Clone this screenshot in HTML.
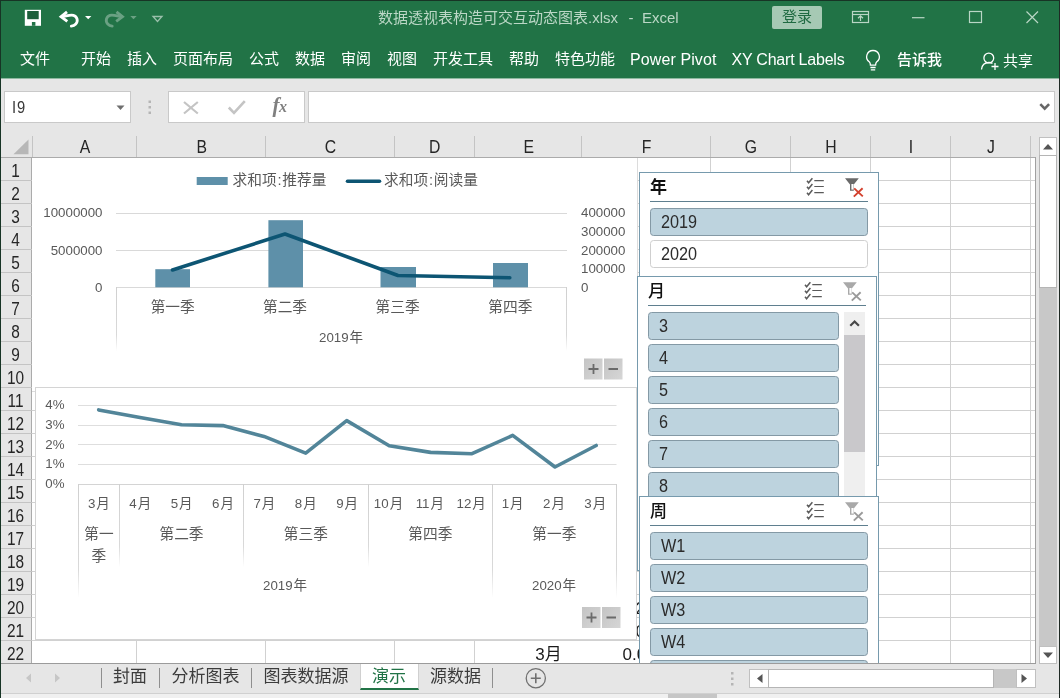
<!DOCTYPE html>
<html lang="zh-CN">
<head>
<meta charset="utf-8">
<title>Excel</title>
<style>
*{box-sizing:border-box;margin:0;padding:0}
html,body{width:1060px;height:698px;overflow:hidden;background:#e6e6e6}
body{will-change:transform;position:relative;font-family:"Liberation Sans","Noto Sans CJK SC",sans-serif;color:#222;font-size:14px}
.a{position:absolute}
.t{position:absolute;white-space:nowrap;line-height:1}
/* title + ribbon */
#green{left:0;top:0;width:1060px;height:79px;background:#217346;border-bottom:1px solid #8fb8a0}
#bordL{left:0;top:0;width:1.3px;height:698px;background:#173425}
#bordT{left:0;top:0;width:1060px;height:1.3px;background:#173425}
.tab{color:#fff;font-size:15px;top:51px;font-weight:400}
#title{color:#bbd7c6;font-size:15px;top:10px;left:378px}
#login{left:772px;top:6px;width:50px;height:23px;background:#a6c9b4;border-radius:2px}
#login span{left:10px;top:3px;color:#1f6a41;font-size:15px}
/* formula bar */
.box{background:#fff;border:1px solid #c9c9c9}
/* headers */
.ch{top:139.3px;font-size:17.5px;color:#262626;text-align:center;transform:scaleX(.9)}
.rh{left:-0.5px;width:31px;font-size:17.5px;color:#262626;text-align:center;transform:scaleX(.88)}
.vl{width:1px;background:#d1d1d1}
.hl{height:1px;background:#d1d1d1}

.sl{position:absolute;background:#fff;border:1px solid #769aad;overflow:hidden}
.sl .hd{position:absolute;left:10px;top:6px;font-size:17px;font-weight:500;color:#111;line-height:1;white-space:nowrap}
.sl .ul{position:absolute;left:10px;top:28px;height:1px;background:#5f7f8f}
.it{position:absolute;left:10px;height:28px;border:1px solid #8499a5;border-radius:3.5px;background:#bdd3de;font-size:18px;color:#2b2b2b;line-height:26px;padding-left:10px;white-space:nowrap}
.it span{display:inline-block;transform:scaleX(.9);transform-origin:0 50%}
.it.off{background:#fff;border-color:#cfcfcf}
.ic{position:absolute;top:3.1px}
</style>
</head>
<body>
<!-- ===== title bar / ribbon ===== -->
<div id="green" class="a"></div>
<div id="title" class="t">数据透视表构造可交互动态图表.xlsx<span style="display:inline-block;width:22px;text-align:center;margin-left:2px">-</span><span style="margin-left:0px">Excel</span></div>
<div id="login" class="a"><span class="t">登录</span></div>

<!-- quick access icons -->
<svg class="a" style="left:20px;top:6px" width="150" height="26" viewBox="20 6 150 26">
  <!-- save -->
  <rect x="24.800" y="9.800" width="16.200" height="16" fill="#fff"/>
  <rect x="27.200" y="11" width="11.500" height="8.200" fill="#1c5f3b"/>
  <rect x="31.900" y="22" width="3.500" height="3.800" fill="#217346"/>
  <!-- undo -->
  <path d="M62 16.700 C66 16.300 70 14.300 73.500 15.300 C77.500 16.500 78.300 21.500 75.800 24 C74.600 25.300 73 26 71.300 26.200" fill="none" stroke="#fff" stroke-width="2.800" stroke-linecap="round"/>
  <path d="M67 11.800 L61 16.700 L67.300 21.300" fill="none" stroke="#fff" stroke-width="2.800" stroke-linejoin="miter"/>
  <path d="M85 16 h6.400 l-3.200 3.300z" fill="#fff"/>
  <!-- redo (disabled) -->
  <g opacity="0.330">
  <path d="M121.500 16.700 C117.500 16.300 113.500 14.300 110 15.300 C106 16.500 105.200 21.500 107.700 24 C108.900 25.300 110.500 26 112.200 26.200" fill="none" stroke="#fff" stroke-width="2.800" stroke-linecap="round"/>
  <path d="M116.500 11.800 L122.500 16.700 L116.200 21.300" fill="none" stroke="#fff" stroke-width="2.800"/>
  <path d="M130.300 16 h6.400 l-3.200 3.300z" fill="#fff"/>
  </g>
  <!-- customize -->
  <g opacity="0.550"><path d="M153 16.500 h9 l-4.500 5z" fill="none" stroke="#fff" stroke-width="1.300"/></g>
</svg>
<!-- window buttons -->
<svg class="a" style="left:845px;top:4px" width="210" height="28" viewBox="845 4 210 28">
  <g fill="none" stroke="#b9d6c5" stroke-width="1.200">
    <rect x="852.500" y="11.500" width="16" height="11"/>
    <path d="M852.500 14.500h16"/>
    <path d="M860.500 21v-5 M858 18.200 L860.500 15.800 L863 18.200"/>
    <path d="M912 17.700h12.500"/>
    <rect x="969.500" y="11.500" width="12" height="11"/>
    <path d="M1026.500 11.500 l11.500 11.500 M1038 11.500 l-11.500 11.500"/>
  </g>
</svg>
<div class="t tab" style="left:20px">文件</div>
<div class="t tab" style="left:81px">开始</div>
<div class="t tab" style="left:127px">插入</div>
<div class="t tab" style="left:173px">页面布局</div>
<div class="t tab" style="left:249px">公式</div>
<div class="t tab" style="left:295px">数据</div>
<div class="t tab" style="left:341px">审阅</div>
<div class="t tab" style="left:387px">视图</div>
<div class="t tab" style="left:433px">开发工具</div>
<div class="t tab" style="left:509px">帮助</div>
<div class="t tab" style="left:555px">特色功能</div>
<div class="t tab" style="left:630px;font-size:16px;top:52px;letter-spacing:0.1px">Power Pivot</div>
<div class="t tab" style="left:731.5px;font-size:16px;top:52px;letter-spacing:-0.22px">XY Chart Labels</div>
<svg class="a" style="left:861.300px;top:47px" width="24" height="28" viewBox="0 0 24 28">
  <path d="M12 3.500 a6.300 6.300 0 0 1 3.600 11.500 c-0.900 0.900 -1 1.800 -1 3.200 h-5.200 c0 -1.400 -0.100 -2.300 -1 -3.200 A6.300 6.300 0 0 1 12 3.500z" fill="none" stroke="#fff" stroke-width="1.3"/>
  <path d="M9.400 20.500h5.200 M9.800 22.800h4.400" stroke="#fff" stroke-width="1.3"/>
</svg>
<div class="t tab" style="left:897px;font-weight:500;top:52px">告诉我</div>
<svg class="a" style="left:978px;top:48px" width="24" height="26" viewBox="0 0 24 26">
  <circle cx="10.800" cy="10" r="4.900" fill="none" stroke="#fff" stroke-width="1.3"/>
  <path d="M3.500 21.500 c0.500 -5 3.500 -7 7.500 -7 c1.500 0 2.500 0.300 3.500 0.800" fill="none" stroke="#fff" stroke-width="1.3"/>
  <path d="M17 15v7 M13.500 18.500h7" stroke="#fff" stroke-width="1.3"/>
</svg>
<div class="t tab" style="left:1003px;top:52.500px">共享</div>


<div class="a box" style="left:4px;top:91px;width:127px;height:32px"></div>
<div class="t" style="left:11.500px;top:100px;font-size:16px;letter-spacing:1px;color:#383838;transform:scaleX(.92);transform-origin:0 0">I9</div>
<svg class="a" style="left:114.500px;top:103.500px" width="12" height="8"><path d="M1.500 1.500h8l-4 4.500z" fill="#6e6e6e"/></svg>
<svg class="a" style="left:146.800px;top:98.500px" width="6" height="18"><g fill="#b5b5b5"><rect x="1.500" y="1.500" width="2.500" height="2.500"/><rect x="1.500" y="7" width="2.500" height="2.500"/><rect x="1.500" y="12.500" width="2.500" height="2.500"/></g></svg>
<div class="a box" style="left:168px;top:91px;width:137px;height:32px"></div>
<svg class="a" style="left:180px;top:96px" width="120" height="24" viewBox="180 96 120 24">
  <path d="M184 102 l13.800 11.500 M197.800 102 l-13.800 11.500" stroke="#c4c4c4" stroke-width="2.200" fill="none"/>
  <path d="M228.800 107.500 l5.200 5.400 l10.800 -11.800" stroke="#c4c4c4" stroke-width="2.600" fill="none"/>
</svg>
<div class="t" style="left:272.500px;top:94.500px;font-family:'Liberation Serif',serif;font-style:italic;font-weight:700;font-size:21px;color:#808080;letter-spacing:-0.5px">f<span style="font-size:16px;position:relative;top:0.5px">x</span></div>
<div class="a box" style="left:308px;top:91px;width:747px;height:32px"></div>
<svg class="a" style="left:1038px;top:101px" width="14" height="12"><path d="M2.300 3.200 l4.400 4.400 l4.400 -4.400" stroke="#666" stroke-width="2.600" fill="none"/></svg>

<div class="a" style="left:32px;top:158px;width:1004px;height:506px;background:#fff"></div>
<div class="a" style="left:1px;top:157px;width:1035px;height:1px;background:#ababab"></div>
<svg class="a" style="left:13px;top:139px" width="16" height="16"><path d="M15.500 0.500 V15.200 H0.500z" fill="#b7b7b7"/></svg>
<div class="t ch" style="left:32.8px;width:104px">A</div>
<div class="t ch" style="left:136.8px;width:129.5px">B</div>
<div class="t ch" style="left:266.3px;width:129.0px">C</div>
<div class="t ch" style="left:395.3px;width:79.5px">D</div>
<div class="t ch" style="left:474.8px;width:107.5px">E</div>
<div class="t ch" style="left:582.3px;width:129.0px">F</div>
<div class="t ch" style="left:711.3px;width:80.0px">G</div>
<div class="t ch" style="left:791.3px;width:80.0px">H</div>
<div class="t ch" style="left:871.3px;width:80.0px">I</div>
<div class="t ch" style="left:951.3px;width:80.0px">J</div>
<div class="a" style="left:32px;top:136px;width:1px;height:21px;background:#c4c4c4"></div>
<div class="a" style="left:136px;top:136px;width:1px;height:21px;background:#c4c4c4"></div>
<div class="a" style="left:265px;top:136px;width:1px;height:21px;background:#c4c4c4"></div>
<div class="a" style="left:394px;top:136px;width:1px;height:21px;background:#c4c4c4"></div>
<div class="a" style="left:474px;top:136px;width:1px;height:21px;background:#c4c4c4"></div>
<div class="a" style="left:581px;top:136px;width:1px;height:21px;background:#c4c4c4"></div>
<div class="a" style="left:710px;top:136px;width:1px;height:21px;background:#c4c4c4"></div>
<div class="a" style="left:790px;top:136px;width:1px;height:21px;background:#c4c4c4"></div>
<div class="a" style="left:870px;top:136px;width:1px;height:21px;background:#c4c4c4"></div>
<div class="a" style="left:950px;top:136px;width:1px;height:21px;background:#c4c4c4"></div>
<div class="a" style="left:1030px;top:136px;width:1px;height:21px;background:#c4c4c4"></div>
<div class="a" style="left:31px;top:158px;width:1px;height:506px;background:#ababab"></div>
<div class="t rh" style="top:163.2px">1</div>
<div class="a" style="left:1px;top:180px;width:31px;height:1px;background:#c4c4c4"></div>
<div class="t rh" style="top:186.2px">2</div>
<div class="a" style="left:1px;top:203px;width:31px;height:1px;background:#c4c4c4"></div>
<div class="t rh" style="top:209.2px">3</div>
<div class="a" style="left:1px;top:226px;width:31px;height:1px;background:#c4c4c4"></div>
<div class="t rh" style="top:232.2px">4</div>
<div class="a" style="left:1px;top:249px;width:31px;height:1px;background:#c4c4c4"></div>
<div class="t rh" style="top:255.2px">5</div>
<div class="a" style="left:1px;top:272px;width:31px;height:1px;background:#c4c4c4"></div>
<div class="t rh" style="top:278.2px">6</div>
<div class="a" style="left:1px;top:295px;width:31px;height:1px;background:#c4c4c4"></div>
<div class="t rh" style="top:301.2px">7</div>
<div class="a" style="left:1px;top:318px;width:31px;height:1px;background:#c4c4c4"></div>
<div class="t rh" style="top:324.2px">8</div>
<div class="a" style="left:1px;top:341px;width:31px;height:1px;background:#c4c4c4"></div>
<div class="t rh" style="top:347.2px">9</div>
<div class="a" style="left:1px;top:364px;width:31px;height:1px;background:#c4c4c4"></div>
<div class="t rh" style="top:370.2px">10</div>
<div class="a" style="left:1px;top:387px;width:31px;height:1px;background:#c4c4c4"></div>
<div class="t rh" style="top:393.2px">11</div>
<div class="a" style="left:1px;top:410px;width:31px;height:1px;background:#c4c4c4"></div>
<div class="t rh" style="top:416.2px">12</div>
<div class="a" style="left:1px;top:433px;width:31px;height:1px;background:#c4c4c4"></div>
<div class="t rh" style="top:439.2px">13</div>
<div class="a" style="left:1px;top:456px;width:31px;height:1px;background:#c4c4c4"></div>
<div class="t rh" style="top:462.2px">14</div>
<div class="a" style="left:1px;top:479px;width:31px;height:1px;background:#c4c4c4"></div>
<div class="t rh" style="top:485.2px">15</div>
<div class="a" style="left:1px;top:502px;width:31px;height:1px;background:#c4c4c4"></div>
<div class="t rh" style="top:508.2px">16</div>
<div class="a" style="left:1px;top:525px;width:31px;height:1px;background:#c4c4c4"></div>
<div class="t rh" style="top:531.2px">17</div>
<div class="a" style="left:1px;top:548px;width:31px;height:1px;background:#c4c4c4"></div>
<div class="t rh" style="top:554.2px">18</div>
<div class="a" style="left:1px;top:571px;width:31px;height:1px;background:#c4c4c4"></div>
<div class="t rh" style="top:577.2px">19</div>
<div class="a" style="left:1px;top:594px;width:31px;height:1px;background:#c4c4c4"></div>
<div class="t rh" style="top:600.2px">20</div>
<div class="a" style="left:1px;top:617px;width:31px;height:1px;background:#c4c4c4"></div>
<div class="t rh" style="top:623.2px">21</div>
<div class="a" style="left:1px;top:640px;width:31px;height:1px;background:#c4c4c4"></div>
<div class="t rh" style="top:646.2px">22</div>
<div class="a" style="left:1px;top:663px;width:31px;height:1px;background:#c4c4c4"></div>
<div class="a hl" style="left:32px;top:180px;width:1004px"></div>
<div class="a hl" style="left:32px;top:203px;width:1004px"></div>
<div class="a hl" style="left:32px;top:226px;width:1004px"></div>
<div class="a hl" style="left:32px;top:249px;width:1004px"></div>
<div class="a hl" style="left:32px;top:272px;width:1004px"></div>
<div class="a hl" style="left:32px;top:295px;width:1004px"></div>
<div class="a hl" style="left:32px;top:318px;width:1004px"></div>
<div class="a hl" style="left:32px;top:341px;width:1004px"></div>
<div class="a hl" style="left:32px;top:364px;width:1004px"></div>
<div class="a hl" style="left:32px;top:387px;width:1004px"></div>
<div class="a hl" style="left:32px;top:410px;width:1004px"></div>
<div class="a hl" style="left:32px;top:433px;width:1004px"></div>
<div class="a hl" style="left:32px;top:456px;width:1004px"></div>
<div class="a hl" style="left:32px;top:479px;width:1004px"></div>
<div class="a hl" style="left:32px;top:502px;width:1004px"></div>
<div class="a hl" style="left:32px;top:525px;width:1004px"></div>
<div class="a hl" style="left:32px;top:548px;width:1004px"></div>
<div class="a hl" style="left:32px;top:571px;width:1004px"></div>
<div class="a hl" style="left:32px;top:594px;width:1004px"></div>
<div class="a hl" style="left:32px;top:617px;width:1004px"></div>
<div class="a hl" style="left:32px;top:640px;width:1004px"></div>
<div class="a hl" style="left:32px;top:663px;width:1004px"></div>
<div class="a vl" style="left:136px;top:158px;height:506px"></div>
<div class="a vl" style="left:265px;top:158px;height:506px"></div>
<div class="a vl" style="left:394px;top:158px;height:506px"></div>
<div class="a vl" style="left:474px;top:158px;height:506px"></div>
<div class="a vl" style="left:581px;top:158px;height:506px"></div>
<div class="a vl" style="left:710px;top:158px;height:506px"></div>
<div class="a vl" style="left:790px;top:158px;height:506px"></div>
<div class="a vl" style="left:870px;top:158px;height:506px"></div>
<div class="a vl" style="left:950px;top:158px;height:506px"></div>
<div class="a vl" style="left:1030px;top:158px;height:506px"></div>
<div class="a" style="left:1035px;top:157px;width:1px;height:507px;background:#a0a0a0"></div>
<div class="a" style="left:581px;top:641px;width:1px;height:22px;background:#fff"></div>
<div class="t" style="left:535.300px;top:646px;font-size:17px;color:#1a1a1a">3月</div>
<div class="t" style="left:622.500px;top:646px;font-size:17px;color:#1a1a1a">0.0</div>
<div class="t" style="left:635.500px;top:600px;font-size:17px;color:#1a1a1a">2</div>
<div class="t" style="left:635.500px;top:623px;font-size:17px;color:#1a1a1a">0</div>

<svg class="a" style="left:32px;top:158px" width="606" height="234" viewBox="32 158 606 234">
<defs><linearGradient id="fd" x1="0" y1="0" x2="0" y2="1"><stop offset="0" stop-color="#d0d0d0"/><stop offset="0.75" stop-color="#d9d9d9"/><stop offset="1" stop-color="#fff"/></linearGradient><linearGradient id="btn" x1="0" y1="0" x2="1" y2="1"><stop offset="0" stop-color="#c4c4c4"/><stop offset="1" stop-color="#d6d6d6"/></linearGradient></defs>
<rect x="20" y="150" width="617.500" height="241.500" fill="#fff" stroke="#dcdcdc"/>
<rect x="116" y="213" width="451" height="1" fill="#d9d9d9"/>
<rect x="116" y="250" width="451" height="1" fill="#d9d9d9"/>
<rect x="116" y="287" width="451" height="1" fill="#d9d9d9"/>
<rect x="116" y="287" width="1" height="64" fill="url(#fd)"/>
<rect x="566" y="287" width="1" height="64" fill="url(#fd)"/>
<rect x="155.3" y="269.2" width="34.7" height="18.1" fill="#5e90a9"/>
<rect x="268.4" y="220.2" width="34.6" height="67.1" fill="#5e90a9"/>
<rect x="380.5" y="267" width="35.5" height="20.3" fill="#5e90a9"/>
<rect x="493" y="263" width="35.0" height="24.3" fill="#5e90a9"/>
<polyline points="172.5,270 285,234 398,275.5 509.8,277.7" fill="none" stroke="#0d5573" stroke-width="3.6" stroke-linecap="round" stroke-linejoin="round"/>
<rect x="196.700" y="177" width="31" height="8" fill="#5e90a9"/>
<path d="M347.500 181.300 H379.500" stroke="#0d5573" stroke-width="3.600" stroke-linecap="round"/>
<text x="232.500" y="185" font-family="Liberation Sans, Noto Sans CJK SC, sans-serif" font-size="14.700" fill="#595959">求和项<tspan dx="0.8">:</tspan><tspan dx="0.9">推荐量</tspan></text>
<text x="384" y="185" font-family="Liberation Sans, Noto Sans CJK SC, sans-serif" font-size="14.700" fill="#595959">求和项<tspan dx="0.8">:</tspan><tspan dx="0.9">阅读量</tspan></text>
<text x="102.500" y="217" text-anchor="end" font-family="Liberation Sans, Noto Sans CJK SC, sans-serif" font-size="13.300" fill="#595959">10000000</text>
<text x="102.500" y="255" text-anchor="end" font-family="Liberation Sans, Noto Sans CJK SC, sans-serif" font-size="13.300" fill="#595959">5000000</text>
<text x="102.500" y="292" text-anchor="end" font-family="Liberation Sans, Noto Sans CJK SC, sans-serif" font-size="13.300" fill="#595959">0</text>
<text x="581" y="217" font-family="Liberation Sans, Noto Sans CJK SC, sans-serif" font-size="13.300" fill="#595959">400000</text>
<text x="581" y="236" font-family="Liberation Sans, Noto Sans CJK SC, sans-serif" font-size="13.300" fill="#595959">300000</text>
<text x="581" y="255" font-family="Liberation Sans, Noto Sans CJK SC, sans-serif" font-size="13.300" fill="#595959">200000</text>
<text x="581" y="273" font-family="Liberation Sans, Noto Sans CJK SC, sans-serif" font-size="13.300" fill="#595959">100000</text>
<text x="581" y="292" font-family="Liberation Sans, Noto Sans CJK SC, sans-serif" font-size="13.300" fill="#595959">0</text>
<text x="172.7" y="311.500" text-anchor="middle" font-family="Liberation Sans, Noto Sans CJK SC, sans-serif" font-size="14.700" fill="#595959">第一季</text>
<text x="285" y="311.500" text-anchor="middle" font-family="Liberation Sans, Noto Sans CJK SC, sans-serif" font-size="14.700" fill="#595959">第二季</text>
<text x="397.6" y="311.500" text-anchor="middle" font-family="Liberation Sans, Noto Sans CJK SC, sans-serif" font-size="14.700" fill="#595959">第三季</text>
<text x="510.3" y="311.500" text-anchor="middle" font-family="Liberation Sans, Noto Sans CJK SC, sans-serif" font-size="14.700" fill="#595959">第四季</text>
<text x="341" y="342" text-anchor="middle" font-family="Liberation Sans, Noto Sans CJK SC, sans-serif" font-size="13.300" fill="#595959">2019<tspan font-size="13.500" dx="0.8">年</tspan></text>
<rect x="584" y="358.500" width="18.500" height="21" fill="url(#btn)"/><rect x="604" y="358.500" width="18.500" height="21" fill="url(#btn)"/>
<path d="M588.500 369h10 M593.500 364v10 M608.500 369h9.500" stroke="#6b6b6b" stroke-width="1.800"/>
</svg>

<svg class="a" style="left:35px;top:387px" width="602" height="254" viewBox="35 387 602 254">
<rect x="35.500" y="387.500" width="601" height="252" fill="#fff" stroke="#d4d4d4"/>
<rect x="78" y="405" width="538.500" height="1" fill="#dedede"/>
<rect x="78" y="425" width="538.500" height="1" fill="#dedede"/>
<rect x="78" y="444" width="538.500" height="1" fill="#dedede"/>
<rect x="78" y="464" width="538.500" height="1" fill="#dedede"/>
<rect x="78" y="484" width="538.500" height="1" fill="#d4d4d4"/>
<rect x="78" y="484" width="1" height="114" fill="url(#fd)"/>
<rect x="492" y="484" width="1" height="114" fill="url(#fd)"/>
<rect x="616" y="484" width="1" height="114" fill="url(#fd)"/>
<rect x="119" y="484" width="1" height="83" fill="url(#fd)"/>
<rect x="243" y="484" width="1" height="83" fill="url(#fd)"/>
<rect x="368" y="484" width="1" height="83" fill="url(#fd)"/>
<polyline points="98.7,409.9 140,417.5 181.5,424.7 222.8,425.6 264,436.4 305.7,453.1 346.7,420.6 389.2,445.8 430.6,452.4 472,453.7 512.7,435.4 555,467 596.2,445.5" fill="none" stroke="#528599" stroke-width="3.600" stroke-linecap="round" stroke-linejoin="round"/>
<text x="64.500" y="409" text-anchor="end" font-family="Liberation Sans, Noto Sans CJK SC, sans-serif" font-size="13.300" fill="#595959">4%</text>
<text x="64.500" y="429" text-anchor="end" font-family="Liberation Sans, Noto Sans CJK SC, sans-serif" font-size="13.300" fill="#595959">3%</text>
<text x="64.500" y="449" text-anchor="end" font-family="Liberation Sans, Noto Sans CJK SC, sans-serif" font-size="13.300" fill="#595959">2%</text>
<text x="64.500" y="468" text-anchor="end" font-family="Liberation Sans, Noto Sans CJK SC, sans-serif" font-size="13.300" fill="#595959">1%</text>
<text x="64.500" y="488" text-anchor="end" font-family="Liberation Sans, Noto Sans CJK SC, sans-serif" font-size="13.300" fill="#595959">0%</text>
<text x="98.9" y="508.100" text-anchor="middle" font-family="Liberation Sans, Noto Sans CJK SC, sans-serif" font-size="13.300" fill="#595959">3<tspan font-size="13.500" dx="1">月</tspan></text>
<text x="140.3" y="508.100" text-anchor="middle" font-family="Liberation Sans, Noto Sans CJK SC, sans-serif" font-size="13.300" fill="#595959">4<tspan font-size="13.500" dx="1">月</tspan></text>
<text x="181.6" y="508.100" text-anchor="middle" font-family="Liberation Sans, Noto Sans CJK SC, sans-serif" font-size="13.300" fill="#595959">5<tspan font-size="13.500" dx="1">月</tspan></text>
<text x="223.0" y="508.100" text-anchor="middle" font-family="Liberation Sans, Noto Sans CJK SC, sans-serif" font-size="13.300" fill="#595959">6<tspan font-size="13.500" dx="1">月</tspan></text>
<text x="264.4" y="508.100" text-anchor="middle" font-family="Liberation Sans, Noto Sans CJK SC, sans-serif" font-size="13.300" fill="#595959">7<tspan font-size="13.500" dx="1">月</tspan></text>
<text x="305.7" y="508.100" text-anchor="middle" font-family="Liberation Sans, Noto Sans CJK SC, sans-serif" font-size="13.300" fill="#595959">8<tspan font-size="13.500" dx="1">月</tspan></text>
<text x="347.1" y="508.100" text-anchor="middle" font-family="Liberation Sans, Noto Sans CJK SC, sans-serif" font-size="13.300" fill="#595959">9<tspan font-size="13.500" dx="1">月</tspan></text>
<text x="388.5" y="508.100" text-anchor="middle" font-family="Liberation Sans, Noto Sans CJK SC, sans-serif" font-size="13.300" fill="#595959">10<tspan font-size="13.500" dx="1">月</tspan></text>
<text x="429.8" y="508.100" text-anchor="middle" font-family="Liberation Sans, Noto Sans CJK SC, sans-serif" font-size="13.300" fill="#595959">11<tspan font-size="13.500" dx="1">月</tspan></text>
<text x="471.2" y="508.100" text-anchor="middle" font-family="Liberation Sans, Noto Sans CJK SC, sans-serif" font-size="13.300" fill="#595959">12<tspan font-size="13.500" dx="1">月</tspan></text>
<text x="512.6" y="508.100" text-anchor="middle" font-family="Liberation Sans, Noto Sans CJK SC, sans-serif" font-size="13.300" fill="#595959">1<tspan font-size="13.500" dx="1">月</tspan></text>
<text x="554.0" y="508.100" text-anchor="middle" font-family="Liberation Sans, Noto Sans CJK SC, sans-serif" font-size="13.300" fill="#595959">2<tspan font-size="13.500" dx="1">月</tspan></text>
<text x="595.3" y="508.100" text-anchor="middle" font-family="Liberation Sans, Noto Sans CJK SC, sans-serif" font-size="13.300" fill="#595959">3<tspan font-size="13.500" dx="1">月</tspan></text>
<text x="98.900" y="539" text-anchor="middle" font-family="Liberation Sans, Noto Sans CJK SC, sans-serif" font-size="14.700" fill="#595959">第一</text>
<text x="98.900" y="560.500" text-anchor="middle" font-family="Liberation Sans, Noto Sans CJK SC, sans-serif" font-size="14.700" fill="#595959">季</text>
<text x="181.5" y="539" text-anchor="middle" font-family="Liberation Sans, Noto Sans CJK SC, sans-serif" font-size="14.700" fill="#595959">第二季</text>
<text x="305.8" y="539" text-anchor="middle" font-family="Liberation Sans, Noto Sans CJK SC, sans-serif" font-size="14.700" fill="#595959">第三季</text>
<text x="430.3" y="539" text-anchor="middle" font-family="Liberation Sans, Noto Sans CJK SC, sans-serif" font-size="14.700" fill="#595959">第四季</text>
<text x="554.3" y="539" text-anchor="middle" font-family="Liberation Sans, Noto Sans CJK SC, sans-serif" font-size="14.700" fill="#595959">第一季</text>
<text x="285" y="590" text-anchor="middle" font-family="Liberation Sans, Noto Sans CJK SC, sans-serif" font-size="13.300" fill="#595959">2019<tspan font-size="13.500" dx="0.8">年</tspan></text>
<text x="554" y="590" text-anchor="middle" font-family="Liberation Sans, Noto Sans CJK SC, sans-serif" font-size="13.300" fill="#595959">2020<tspan font-size="13.500" dx="0.8">年</tspan></text>
<rect x="582" y="607" width="18.500" height="21" fill="url(#btn)"/><rect x="602" y="607" width="18.500" height="21" fill="url(#btn)"/>
<path d="M586.500 617.500h10 M591.500 612.500v10 M606.500 617.500h9.500" stroke="#6b6b6b" stroke-width="1.800"/>
</svg>

<div class="sl" style="left:639px;top:172px;width:240px;height:294px">
<div class="hd" style="font-weight:700">年</div><svg class="ic" style="left:166px" width="20" height="22" viewBox="0 0 20 22"><g fill="none" stroke="#5a5a5a" stroke-width="1.500"><path d="M1 4.800 l1.600 2 l3.800 -4.600 M1 10.700 l1.600 2 l3.800 -4.600 M1 16.700 l1.600 2 l3.800 -4.600"/><path d="M8.300 4.600h9.500 M8.300 10.500h9.500 M8.300 16.600h9.500" stroke-width="1.200"/></g></svg><svg class="ic" style="left:204px" width="22" height="24" viewBox="0 0 22 24"><path d="M1 2.200 h13.800 l-5 6.300 v6.300 h-3.800 v-6.300z" fill="#6a6a6a"/><path d="M7.400 8 h2.200 v5.600 h-2.200z" fill="#fff"/><path d="M3.600 3.200 h8.600 l-1.500 1.900 h-5.600z" fill="#6a6a6a"/><path d="M10.200 12.400 l8.600 8 M18.600 12.200 l-8.800 8.400" stroke="#d3412e" stroke-width="1.900" fill="none"/></svg>
<div class="ul" style="width:218px"></div>
<div class="it" style="top:35px;width:218px"><span>2019</span></div>
<div class="it off" style="top:67px;width:218px"><span>2020</span></div>
</div>
<div class="sl" style="left:637px;top:276px;width:240px;height:295px">
<div class="hd">月</div><svg class="ic" style="left:166px" width="20" height="22" viewBox="0 0 20 22"><g fill="none" stroke="#5a5a5a" stroke-width="1.500"><path d="M1 4.800 l1.600 2 l3.800 -4.600 M1 10.700 l1.600 2 l3.800 -4.600 M1 16.700 l1.600 2 l3.800 -4.600"/><path d="M8.300 4.600h9.500 M8.300 10.500h9.500 M8.300 16.600h9.500" stroke-width="1.200"/></g></svg><svg class="ic" style="left:204px" width="22" height="24" viewBox="0 0 22 24"><path d="M1 2.200 h13.800 l-5 6.300 v6.300 h-3.800 v-6.300z" fill="#a9a9a9"/><path d="M7.400 8 h2.200 v5.600 h-2.200z" fill="#fff"/><path d="M3.600 3.200 h8.600 l-1.500 1.900 h-5.600z" fill="#a9a9a9"/><path d="M10.200 12.400 l8.600 8 M18.600 12.200 l-8.800 8.400" stroke="#9a9a9a" stroke-width="1.900" fill="none"/></svg>
<div class="ul" style="width:218px"></div>
<div class="it" style="top:35px;width:191px"><span>3</span></div><div class="it" style="top:67px;width:191px"><span>4</span></div><div class="it" style="top:99px;width:191px"><span>5</span></div><div class="it" style="top:131px;width:191px"><span>6</span></div><div class="it" style="top:163px;width:191px"><span>7</span></div><div class="it" style="top:195px;width:191px"><span>8</span></div>
<div style="position:absolute;left:206px;top:35px;width:21px;height:190px;background:#efefef"></div>
<div style="position:absolute;left:206px;top:58px;width:21px;height:117px;background:#c9c8cb"></div>
<svg style="position:absolute;left:206px;top:35px" width="21" height="23"><path d="M6.300 13.800 l4.300 -4.300 l4.300 4.300" fill="none" stroke="#484848" stroke-width="2.200"/></svg>
</div>
<div class="sl" style="left:639px;top:496px;width:240px;height:168px;border-bottom:none">
<div class="hd">周</div><svg class="ic" style="left:166px" width="20" height="22" viewBox="0 0 20 22"><g fill="none" stroke="#5a5a5a" stroke-width="1.500"><path d="M1 4.800 l1.600 2 l3.800 -4.600 M1 10.700 l1.600 2 l3.800 -4.600 M1 16.700 l1.600 2 l3.800 -4.600"/><path d="M8.300 4.600h9.500 M8.300 10.500h9.500 M8.300 16.600h9.500" stroke-width="1.200"/></g></svg><svg class="ic" style="left:204px" width="22" height="24" viewBox="0 0 22 24"><path d="M1 2.200 h13.800 l-5 6.300 v6.300 h-3.800 v-6.300z" fill="#a9a9a9"/><path d="M7.400 8 h2.200 v5.600 h-2.200z" fill="#fff"/><path d="M3.600 3.200 h8.600 l-1.500 1.900 h-5.600z" fill="#a9a9a9"/><path d="M10.200 12.400 l8.600 8 M18.600 12.200 l-8.800 8.400" stroke="#9a9a9a" stroke-width="1.900" fill="none"/></svg>
<div class="ul" style="width:218px"></div>
<div class="it" style="top:35px;width:218px"><span>W1</span></div><div class="it" style="top:67px;width:218px"><span>W2</span></div><div class="it" style="top:99px;width:218px"><span>W3</span></div><div class="it" style="top:131px;width:218px"><span>W4</span></div><div class="it" style="top:163px;width:218px"><span>W5</span></div>
</div>

<div class="a" style="left:1px;top:663px;width:1035px;height:1px;background:#9b9b9b"></div>
<div class="a" style="left:0;top:694px;width:1060px;height:4px;background:#f0f0f0"></div>
<div class="a" style="left:0;top:693px;width:1060px;height:1px;background:#d0d0d0"></div>
<div class="a" style="left:668px;top:694px;width:49px;height:4px;background:#c6c6c6"></div>
<svg class="a" style="left:20px;top:670px" width="50" height="16"><path d="M11 3.500 v9 l-5 -4.500z M35 3.500 v9 l5 -4.500z" fill="#c6c6c6"/></svg>
<div class="a" style="left:101px;top:668px;width:1px;height:20px;background:#8f8f8f"></div>
<div class="a" style="left:159px;top:668px;width:1px;height:20px;background:#8f8f8f"></div>
<div class="a" style="left:251px;top:668px;width:1px;height:20px;background:#8f8f8f"></div>
<div class="a" style="left:492px;top:668px;width:1px;height:20px;background:#8f8f8f"></div>
<div class="t" style="left:113px;font-size:17px;top:667.5px;color:#3c3c3c">封面</div>
<div class="t" style="left:171.500px;font-size:17px;top:667.5px;color:#3c3c3c">分析图表</div>
<div class="t" style="left:263.500px;font-size:17px;top:667.5px;color:#3c3c3c">图表数据源</div>
<div class="a" style="left:360px;top:664px;width:59px;height:26px;background:#fff;border-bottom:2px solid #217346;border-left:1px solid #d0d0d0;border-right:1px solid #d0d0d0"></div>
<div class="t" style="left:372px;font-size:17px;top:667.5px;color:#3c3c3c;color:#217346">演示</div>
<div class="t" style="left:430px;font-size:17px;top:667.5px;color:#3c3c3c">源数据</div>
<svg class="a" style="left:523px;top:666px" width="26" height="26"><circle cx="12.800" cy="12.200" r="9.600" fill="none" stroke="#707070" stroke-width="1.300"/><path d="M12.800 7.200v10 M7.800 12.200h10" stroke="#707070" stroke-width="1.600"/></svg>
<svg class="a" style="left:729px;top:671px" width="6" height="18"><g fill="#b5b5b5"><rect x="2" y="1" width="2.500" height="2.500"/><rect x="2" y="6.500" width="2.500" height="2.500"/><rect x="2" y="12" width="2.500" height="2.500"/></g></svg>
<div class="a" style="left:749px;top:669px;width:287px;height:19px;background:#c8c8c8"></div>
<div class="a box" style="left:749px;top:669px;width:20px;height:19px;border-color:#c0c0c0"></div>
<div class="a box" style="left:768px;top:669px;width:226px;height:19px;border-color:#b5b5b5"></div>
<div class="a box" style="left:1016px;top:669px;width:20px;height:19px;border-color:#c0c0c0"></div>
<svg class="a" style="left:749px;top:669px" width="287" height="19"><path d="M13.500 5 v9 l-5.500 -4.500z M272.500 5 v9 l5.500 -4.500z" fill="#555"/></svg>
<div class="a" style="left:1039px;top:137px;width:18px;height:527px;background:#c8c8c8"></div>
<div class="a box" style="left:1039px;top:137px;width:18px;height:19px;border-color:#c0c0c0"></div>
<div class="a box" style="left:1039px;top:155px;width:18px;height:133px;border-color:#b5b5b5"></div>
<div class="a box" style="left:1039px;top:646px;width:18px;height:18px;border-color:#c0c0c0"></div>
<svg class="a" style="left:1039px;top:137px" width="18" height="527"><path d="M4 12.500 h10 l-5 -5.500z M4 515.500 h10 l-5 5.500z" fill="#555"/></svg>

<div class="a" style="left:1058.600px;top:0;width:1.400px;height:698px;background:#1f2a24"></div>
<div id="bordL" class="a"></div><div id="bordT" class="a"></div>
</body>
</html>
